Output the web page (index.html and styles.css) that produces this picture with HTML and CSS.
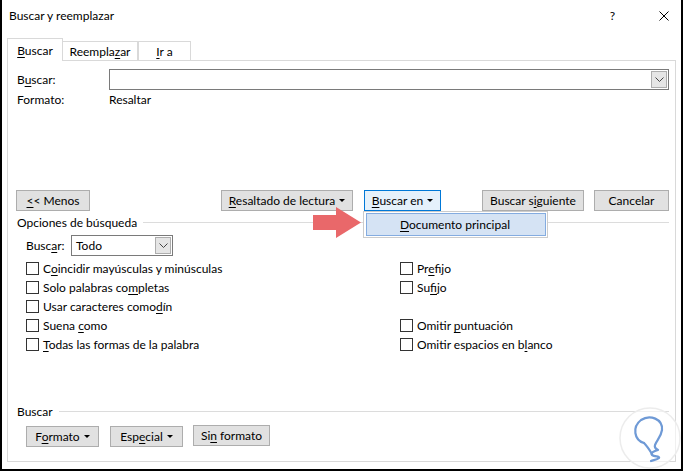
FILE: index.html
```html
<!DOCTYPE html>
<html lang="es">
<head>
<meta charset="utf-8">
<title>Buscar y reemplazar</title>
<link rel="stylesheet" href="styles.css">
</head>
<body>
<div class="window">
  <div class="titlebar">
    <span class="title">Buscar y reemplazar</span>
    <span class="help">?</span>
    <svg class="close" width="10" height="10" viewBox="0 0 10 10"><path d="M0.5 0.5 L9.5 9.5 M9.5 0.5 L0.5 9.5" stroke="#000" stroke-width="1" fill="none"/></svg>
  </div>
  <div class="tabs">
    <div class="tab active"><span><u>B</u>uscar</span></div>
    <div class="tab"><span>Reempla<u>z</u>ar</span></div>
    <div class="tab"><span><u>I</u>r a</span></div>
  </div>
  <div class="panel">
    <div class="row find-row">
      <span class="lbl">B<u>u</u>scar:</span>
      <div class="combo">
        <span class="combo-btn"><svg width="9" height="5" viewBox="0 0 9 5"><path d="M0.5 0.5 L4.5 4.5 L8.5 0.5" stroke="#444" fill="none"/></svg></span>
      </div>
    </div>
    <div class="row fmt-row">
      <span class="lbl">Formato:</span>
      <span>Resaltar</span>
    </div>
    <div class="btn-row">
      <div class="btn b-menos"><span><u>&lt;</u>&lt; Menos</span></div>
      <div class="btn b-resalt"><span><u>R</u>esaltado de lectura</span><i class="caret"></i></div>
      <div class="btn b-en"><span><u>B</u>uscar en</span><i class="caret"></i>
        <div class="menu"><div class="menu-item"><span><u>D</u>ocumento principal</span></div></div>
      </div>
      <div class="btn b-sig"><span>Buscar s<u>i</u>guiente</span></div>
      <div class="btn b-cancel"><span>Cancelar</span></div>
      <svg class="arrow" width="48" height="31" viewBox="0 0 48 31"><path d="M0 8 H23 V0 L48 15.5 L23 31 V23 H0 Z" fill="#e9686a"/></svg>
    </div>
    <div class="group opts"><span>Opciones de búsqueda</span><i class="rule"></i></div>
    <div class="row scope-row">
      <span class="lbl2">Busc<u>a</u>r:</span>
      <div class="select"><span class="sel-text">Todo</span>
        <span class="sel-btn"><svg width="9" height="5" viewBox="0 0 9 5"><path d="M0.5 0.5 L4.5 4.5 L8.5 0.5" stroke="#444" fill="none"/></svg></span>
      </div>
    </div>
    <div class="checks">
      <label class="chk"><i class="box"></i><span>C<u>o</u>incidir mayúsculas y minúsculas</span></label>
      <label class="chk"><i class="box"></i><span>Pr<u>e</u>fijo</span></label>
      <label class="chk"><i class="box"></i><span>Solo palabras co<u>m</u>pletas</span></label>
      <label class="chk"><i class="box"></i><span>Su<u>f</u>ijo</span></label>
      <label class="chk"><i class="box"></i><span>Usar caracteres como<u>d</u>ín</span></label>
      <span></span>
      <label class="chk"><i class="box"></i><span>Suena <u>c</u>omo</span></label>
      <label class="chk"><i class="box"></i><span>Omitir <u>p</u>untuación</span></label>
      <label class="chk"><i class="box"></i><span><u>T</u>odas las formas de la palabra</span></label>
      <label class="chk"><i class="box"></i><span>Omitir espacios en b<u>l</u>anco</span></label>
    </div>
    <div class="group bus"><span>Buscar</span><i class="rule"></i></div>
    <div class="bottom-btns">
      <div class="btn b-fmt"><span>F<u>o</u>rmato</span><i class="caret"></i></div>
      <div class="btn b-esp"><span>Esp<u>e</u>cial</span><i class="caret"></i></div>
      <div class="btn b-sin"><span>Si<u>n</u> formato</span></div>
    </div>
    <svg class="mark" width="62" height="62" viewBox="0 0 62 62">
      <circle cx="31" cy="31" r="30" fill="rgba(255,255,255,0.6)" stroke="#ececec" stroke-width="1.5"/>
      <path d="M25 36 C15 33 13 20 22 13 C31 7 44 12 43 23 C42 30 38 33 36 38 C35 41 37 42 39 43 C35 44 31 46 33 48 C36 50 41 49 40 51 C38 53 34 53 32 54" stroke="#6f9ad6" stroke-width="2.2" fill="none" stroke-linecap="round" stroke-linejoin="round"/>
      <path d="M25 36 C27 38 30 42 33 47" stroke="#6f9ad6" stroke-width="2.2" fill="none" stroke-linecap="round"/>
    </svg>
  </div>
</div>
</body>
</html>
```
FILE: styles.css
```css
* { box-sizing: border-box; }
html, body { margin: 0; padding: 0; background: #fff; }
body {
  font-family: "Lato", "Noto Sans", sans-serif;
  font-size: 12px;
  color: #000;
}
u { text-decoration: underline; text-underline-offset: 2px; }
.window {
  width: 683px;
  height: 471px;
  border-left: 2px solid #000;
  border-right: 2px solid #000;
  border-bottom: 2px solid #000;
  background: #fff;
  position: relative;
}
.titlebar {
  height: 38px;
  display: flex;
  align-items: flex-start;
  padding-top: 7px;
  padding-left: 7px;
}
.title { line-height: 18px; }
.help { margin-left: auto; line-height: 18px; margin-right: 44px; }
.close { margin-right: 12px; margin-top: 4px; }
.tabs {
  display: flex;
  align-items: flex-end;
  margin-left: 5px;
  height: 22px;
  position: relative;
  z-index: 1;
}
.tab {
  height: 19px;
  border: 1px solid #d9d9d9;
  border-bottom: none;
  background: #fff;
  display: flex;
  align-items: center;
  justify-content: center;
}
.tab.active {
  height: 23px;
  width: 56px;
  margin-bottom: -1px;
  position: relative;
}
.tab:nth-child(2) { width: 75px; border-left: none; }
.tab:nth-child(3) { width: 53px; border-left: 1px solid #d9d9d9; }
.panel {
  margin-left: 5px;
  width: 669px;
  height: 402px;
  border: 1px solid #d9d9d9;
  position: relative;
  padding: 8px 0 0 9px;
}
.row { display: flex; align-items: center; }
.lbl { width: 92px; }
.find-row { height: 21px; }
.combo {
  width: 560px;
  height: 21px;
  border: 1px solid #7a7a7a;
  display: flex;
  justify-content: flex-end;
  padding: 1px;
}
.combo-btn, .sel-btn {
  width: 16px;
  height: 17px;
  background: #e5e5e5;
  border: 1px solid #adadad;
  display: flex;
  align-items: center;
  justify-content: center;
}
.fmt-row { height: 18px; }
.btn-row {
  position: relative;
  display: flex;
  margin-top: 82px;
  height: 21px;
  margin-left: -1px;
}
.btn {
  height: 21px;
  border: 1px solid #adadad;
  background: #e1e1e1;
  display: flex;
  align-items: center;
  justify-content: center;
  white-space: nowrap;
  padding-bottom: 1px;
}
.caret {
  display: inline-block;
  width: 0; height: 0;
  border-left: 3px solid transparent;
  border-right: 3px solid transparent;
  border-top: 3px solid #000;
  margin-left: 4px;
  margin-top: 1px;
}
.b-menos { width: 74px; }
.b-resalt { width: 132px; margin-left: 131px; }
.b-en { width: 77px; margin-left: 11px; background: #e5f1fb; border-color: #0078d7; position: relative; }
.b-sig { width: 102px; margin-left: 41px; }
.b-cancel { width: 75px; margin-left: 10px; }
.menu {
  position: absolute;
  left: -2px;
  top: 20px;
  width: 185px;
  height: 27px;
  background: #fff;
  border: 1px solid #cccccc;
  padding: 1px 1px 1px 2px;
  z-index: 3;
}
.menu-item {
  height: 23px;
  background: #d5e3f4;
  border: 1px solid #84ace0;
  display: flex;
  align-items: center;
  justify-content: center;
  padding-right: 2px;
  padding-bottom: 1px;
}
.arrow {
  position: absolute;
  left: 297px;
  top: 17px;
  z-index: 2;
}
.group {
  display: flex;
  align-items: center;
  height: 18px;
}
.group .rule {
  flex: 1;
  height: 1px;
  background: #dcdcdc;
  margin-left: 6px;
  margin-right: 6px;
}
.opts { margin-top: 2px; }
.scope-row { margin-top: 4px; height: 21px; padding-left: 9px; }
.lbl2 { width: 45px; }
.select {
  width: 102px;
  height: 21px;
  border: 1px solid #7a7a7a;
  display: flex;
  align-items: center;
  padding: 1px;
}
.sel-text { flex: 1; padding-left: 3px; }
.checks {
  display: grid;
  grid-template-columns: 374px auto;
  grid-auto-rows: 19px;
  margin-top: 3px;
  padding-left: 9px;
}
.chk { display: flex; align-items: center; white-space: nowrap; }
.box {
  width: 13px;
  height: 13px;
  border: 1px solid #333;
  background: #fff;
  margin-right: 4px;
}
.bus { margin-top: 48px; }
.bottom-btns { display: flex; padding-left: 9px; margin-top: 6px; }
.b-fmt { width: 73px; }
.b-esp { width: 73px; margin-left: 11px; }
.b-sin { width: 77px; margin-left: 10px; margin-top: -1px; }
.mark {
  position: absolute;
  right: -6px;
  bottom: -8px;
}
```
